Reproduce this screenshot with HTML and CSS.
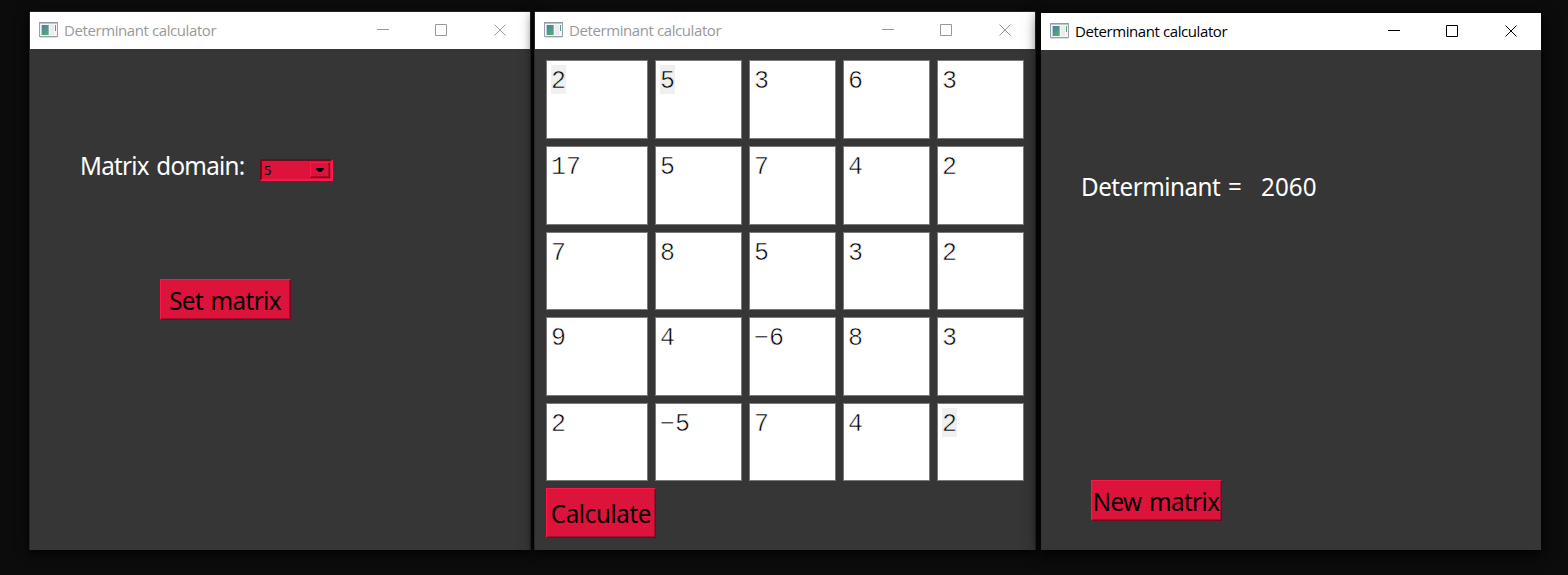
FILE: index.html
```html
<!DOCTYPE html>
<html lang="en">
<head>
<meta charset="utf-8">
<title>Determinant calculator</title>
<link rel="stylesheet" href="styles.css">
</head>
<body>
<svg class="defs" width="0" height="0">
  <defs>
    <linearGradient id="pane" x1="0" y1="0" x2="0.6" y2="1"><stop offset="0" stop-color="#4a7fa5"/><stop offset="1" stop-color="#55a878"/></linearGradient>
    <symbol id="app" viewBox="0 0 19 16">
      <path d="M1 15.5h17" stroke="#dcdcdc"/>
      <rect x=".5" y=".5" width="18" height="14" fill="#f4f5f6" stroke="#9ba1a8"/>
      <path d="M1 1h17" stroke="#8b939c"/>
      <rect x="2" y="3" width="8" height="10" fill="#b9cfd4"/>
      <rect x="3" y="3" width="6.5" height="10" fill="url(#pane)"/>
      <rect x="11" y="3" width="4" height="10" fill="#ececec"/>
      <rect x="16" y="3" width="1" height="6" fill="#55a085"/>
    </symbol>
    <symbol id="controls" viewBox="0 0 132 13">
      <path d="M0 5.5h12M58.5 .5h11v11h-11zM117.5 .5l11 11M128.5 .5l-11 11" fill="none" stroke="currentColor"/>
    </symbol>
  </defs>
</svg>
<main class="desktop">
  <section class="window setup">
    <header class="titlebar"><svg class="app-icon"><use href="#app"/></svg><span class="title">Determinant calculator</span><svg class="controls"><use href="#controls"/></svg></header>
    <div class="body">
      <div class="domain"><span class="label domain-label">Matrix domain:</span>
        <div class="combo"><span>5</span><i class="drop"><svg width="8" height="4" viewBox="0 0 8 4"><path d="M0 0h8v1L5 4H3L0 1z"/></svg></i></div></div>
      <button class="button set"><span>Set matrix</span></button>
    </div>
  </section>
  <section class="window matrix">
    <header class="titlebar"><svg class="app-icon"><use href="#app"/></svg><span class="title">Determinant calculator</span><svg class="controls"><use href="#controls"/></svg></header>
    <div class="body">
      <div class="grid">
        <div class="cell"><mark>2</mark></div><div class="cell"><mark>5</mark></div><div class="cell">3</div><div class="cell">6</div><div class="cell">3</div>
        <div class="cell">17</div><div class="cell">5</div><div class="cell">7</div><div class="cell">4</div><div class="cell">2</div>
        <div class="cell">7</div><div class="cell">8</div><div class="cell">5</div><div class="cell">3</div><div class="cell">2</div>
        <div class="cell">9</div><div class="cell">4</div><div class="cell">−6</div><div class="cell">8</div><div class="cell">3</div>
        <div class="cell">2</div><div class="cell">−5</div><div class="cell">7</div><div class="cell">4</div><div class="cell"><mark>2</mark></div>
      </div>
      <button class="button calculate"><span>Calculate</span></button>
    </div>
  </section>
  <section class="window result active">
    <header class="titlebar"><svg class="app-icon"><use href="#app"/></svg><span class="title">Determinant calculator</span><svg class="controls"><use href="#controls"/></svg></header>
    <div class="body">
      <div class="answer"><span class="label answer-label">Determinant =</span><span class="label value">2060</span></div>
      <button class="button new"><span>New matrix</span></button>
    </div>
  </section>
</main>
</body>
</html>
```
FILE: styles.css
```css
* { box-sizing: border-box; }
body { margin: 0; background: #0c0c0c; }
.defs { position: absolute; }
.desktop { position: relative; width: 1568px; height: 575px; overflow: hidden; }
.window { position: absolute; top: 12px; width: 500px; height: 538px; display: flex; flex-direction: column; background: #363636; box-shadow: 0 -1px 0 0 #262626, -1px 0 0 0 #262626, 1px 0 0 0 #262626, 0 2px 12px #000; }
.setup { left: 30px; }
.matrix { left: 535px; }
.result { left: 1041px; top: 13px; height: 537px; box-shadow: 0 3px 14px 1px #000; }
.titlebar { height: 37px; flex: none; display: flex; align-items: flex-start; background: #fff; color: #999; padding-left: 9px; }
.active .titlebar { color: #000; }
.app-icon { width: 19px; height: 16px; margin-top: 10px; }
.title { width: 160px; margin: 7px 0 0 6px; font: 15px/22px "Open Sans", sans-serif; letter-spacing: -0.41px; white-space: nowrap; }
.controls { width: 132px; height: 13px; margin: 12px 0 0 153px; }
.body { flex: 1; display: flex; flex-direction: column; align-items: flex-start; }
.label { font: 26px/32px "Noto Sans", sans-serif; color: #fff; white-space: nowrap; word-spacing: 2px; transform: scaleX(0.93); transform-origin: left; }
.domain { display: flex; margin: 100px 0 0 50px; height: 33px; }
.domain-label { width: 180px; letter-spacing: -0.78px; }
.combo { width: 73px; height: 22px; margin-top: 10px; display: flex; justify-content: space-between; background: #dc143c; border: 2px solid; border-color: #6e0a1e #ff1745 #ff1745 #6e0a1e; padding: 1px 1px 1px 2px; font: 13px/17px "Noto Sans", sans-serif; }
.drop { width: 20px; height: 16px; padding-right: 1px; display: flex; align-items: center; justify-content: center; border: 1px solid; border-color: #ff1745 #6e0a1e #6e0a1e #ff1745; box-shadow: inset -1px -1px #a50f2d; }
.drop svg { display: block; }
.button { display: flex; justify-content: center; padding: 4px 0 0; background: #dc143c; color: #000; border: 1px solid; border-color: #ff1745 #6e0a1e #6e0a1e #ff1745; box-shadow: inset -1px -1px #a50f2d; font: 26px/32px "Noto Sans", sans-serif; white-space: nowrap; word-spacing: 2px; border-radius: 0; }
.button span { flex: none; transform: scaleX(0.93); }
.set { width: 131px; height: 41px; margin: 97px 0 0 130px; letter-spacing: -0.65px; }
.grid { display: grid; grid-template-columns: 102px repeat(4, 87px); grid-template-rows: 79px 79px 78px 79px 78px; gap: 7px; margin: 11px 0 0 11px; }
.cell { background: #fff; border: 1px solid #7a7a7a; padding: 6px 4px 4px; font: 25px/29px "Liberation Mono", monospace; color: #000; -webkit-text-stroke: 0.55px #fff; }
mark { display: block; width: 15px; height: 29px; margin-top: -2px; line-height: 33px; background: #f0f0f0; color: inherit; -webkit-text-stroke: 0.55px #f0f0f0; }
.calculate { width: 110px; height: 50px; margin: 7px 0 0 11px; padding-top: 8px; letter-spacing: -0.42px; }
.answer { display: flex; margin: 120px 0 0 40px; height: 33px; }
.answer-label { width: 180px; letter-spacing: -0.53px; }
.value { letter-spacing: 0.1px; }
.new { width: 131px; height: 41px; margin: 277px 0 0 50px; letter-spacing: -0.65px; }
```
